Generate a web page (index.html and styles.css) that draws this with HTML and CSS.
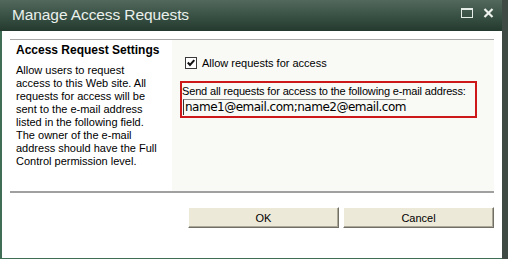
FILE: index.html
```html
<!DOCTYPE html>
<html lang="en">
<head>
    <meta charset="UTF-8">
    <title>Manage Access Requests</title>
    <link rel="stylesheet" href="styles.css">
</head>
<body>
    <div class="dialog">
        <div class="titlebar">
            <span class="title">Manage Access Requests</span>
            <span class="controls">
                <svg width="12" height="10" viewBox="0 0 12 10">
                    <rect x="0.5" y="0.5" width="11" height="9" fill="none" stroke="#e6ece8" stroke-width="1"/>
                    <rect x="0" y="0" width="12" height="2" fill="#e6ece8"/>
                </svg>
                <svg width="11" height="10" viewBox="0 0 11 10">
                    <path d="M1.5 1 L9.5 9 M9.5 1 L1.5 9" stroke="#eef2ef" stroke-width="2.2"/>
                </svg>
            </span>
        </div>

        <div class="content">
            <div class="section">
                <div class="desc">
                    <h2>Access Request Settings</h2>
                    <p>Allow users to request<br>access to this Web site. All<br>requests for access will be<br>sent to the e-mail address<br>listed in the following field.<br>The owner of the e-mail<br>address should have the Full<br>Control permission level.</p>
                </div>
                <div class="fields">
                    <label class="check">
                        <span class="box">
                            <svg width="12" height="12" viewBox="0 0 12 12">
                                <rect x="0.5" y="0.5" width="11" height="11" fill="#fff" stroke="#3a3a3a"/>
                                <path d="M2.8 5.5 L5 8 L9.3 3.2" fill="none" stroke="#111" stroke-width="2"/>
                            </svg>
                        </span>
                        Allow requests for access
                    </label>
                    <div class="highlight">
                        <div class="field-label">Send all requests for access to the following e-mail address:</div>
                        <div class="field-input">name1@email.com;name2@email.com</div>
                    </div>
                </div>
            </div>

            <div class="buttons">
                <button class="btn">OK</button>
                <button class="btn">Cancel</button>
            </div>
        </div>
    </div>
</body>
</html>
```

FILE: styles.css
```css
body {
    margin: 0;
    padding: 0;
    font-family: "Liberation Sans", Arial, sans-serif;
    font-size: 11px;
    color: #000;
    background-color: #3f4a45;
}

.dialog {
    width: 502px;
    height: 258px;
    border-bottom: 1px solid #3f6d55;
    background-color: #ffffff;
    display: flex;
    flex-direction: column;
}

/* title bar */
.titlebar {
    height: 31px;
    background: linear-gradient(to bottom, #53685d 0%, #3c5347 45%, #243a2e 100%);
    display: flex;
    align-items: center;
    justify-content: space-between;
    padding: 0 8px 0 12px;
    flex-shrink: 0;
}

.title {
    color: #eaf0ec;
    font-size: 15.5px;
    letter-spacing: -0.1px;
    margin-top: -2px;
}

.controls {
    display: flex;
    gap: 10px;
    align-items: center;
    margin-top: -6px;
}

/* body */
.content {
    flex: 1;
    border-left: 2px solid #3f6d55;
    padding: 8px 8px 0 8px;
}

.section {
    display: flex;
    height: 151px;
    border-top: 1px solid #a8a8a8;
    border-bottom: 2px solid #a0a0a0;
}

.desc {
    width: 156px;
    padding: 3px 0 0 6px;
}

.desc h2 {
    font-size: 12px;
    font-weight: bold;
    line-height: 14px;
    margin: 0 0 7px 0;
}

.desc p {
    margin: 0;
    line-height: 13px;
}

.fields {
    flex: 1;
    background-color: #f9f9f6;
    padding: 16px 0 0 8px;
}

.check {
    display: flex;
    align-items: center;
    margin-left: 5px;
    gap: 5px;
    height: 13px;
}

.box {
    display: flex;
}

.highlight {
    width: 293px;
    height: 33px;
    margin-top: 12px;
    border: 2px solid #cc1818;
}

.field-label {
    line-height: 15px;
    padding-top: 1px;
    letter-spacing: -0.15px;
}

.field-input {
    width: 221px;
    height: 15px;
    margin-left: 1px;
    border-top: 1px solid #8a8a8a;
    border-left: 1px solid #333;
    font-family: "DejaVu Sans", Verdana, sans-serif;
    font-size: 12px;
    letter-spacing: -0.5px;
    line-height: 15px;
    padding-left: 1px;
    white-space: nowrap;
}

/* buttons */
.buttons {
    display: flex;
    justify-content: flex-end;
    gap: 4px;
    margin-top: 14px;
}

.btn {
    width: 151px;
    height: 21px;
    background-color: #ece9d8;
    border: 1px solid;
    border-color: #ffffff #716f64 #716f64 #ffffff;
    box-shadow: inset -1px -1px 0 #aca899;
    font-family: "Liberation Sans", Arial, sans-serif;
    font-size: 11px;
    color: #000;
    padding: 0;
}
```
